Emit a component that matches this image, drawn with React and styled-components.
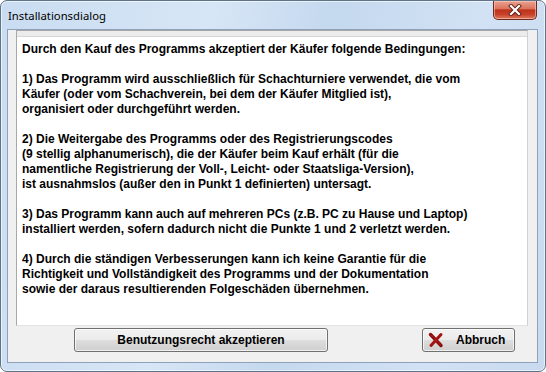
import React from 'react'
import styled, { createGlobalStyle } from 'styled-components'

const GlobalStyle = createGlobalStyle`
    html, body {
        margin: 0;
        padding: 0;
        background: #ffffff;
    }
`

const Window = styled.div`
    box-sizing: border-box;
    width: 546px;
    height: 372px;
    display: flex;
    flex-direction: column;
    padding: 0 7px 8px 6px;
    border: 1px solid #5f7389;
    border-radius: 7px;
    background: linear-gradient(100deg, #c9dcf1 0%, #d7e6f6 35%, #c4d8ee 55%, #d2e2f4 80%, #c8daef 100%);
    box-shadow: inset 0 0 0 1px rgba(255, 255, 255, 0.6);
`

const TitleBar = styled.div`
    height: 28px;
    display: flex;
    align-items: flex-start;
    justify-content: space-between;
`

const Title = styled.span`
    font-family: 'Noto Sans', 'Open Sans', sans-serif;
    font-size: 11.3px;
    color: #000;
    margin-top: 7px;
    margin-left: 1px;
    line-height: 16px;
`

const CloseButton = styled.div`
    box-sizing: border-box;
    width: 44px;
    height: 19px;
    margin-right: 1px;
    display: flex;
    align-items: center;
    justify-content: center;
    border: 1px solid #6e2a20;
    border-top: none;
    border-radius: 0 0 5px 5px;
    background: linear-gradient(to bottom, #eaa291 0%, #dc745d 42%, #bd3219 50%, #c8422a 75%, #de7c5e 100%);
    box-shadow: inset 0 0 0 1px rgba(255, 210, 200, 0.55);
`

const Client = styled.div`
    flex: 1;
    display: flex;
    flex-direction: column;
    padding: 0 9px 10px 8px;
    background: #f0f0f0;
    border: 1px solid #8da2ba;
`

const Panel = styled.div`
    box-sizing: border-box;
    height: 296px;
    display: flex;
    flex-direction: column;
    border: 1px solid #a8a8a8;
    border-right-color: #d0d0d0;
    border-bottom-color: #e2e2e2;
    background: #ffffff;
`

const PanelTop = styled.div`
    height: 5px;
    background: #ececec;
    border-bottom: 1px solid #d6d6d6;
`

const Terms = styled.div`
    padding: 5px 5px 0 5px;
    font-family: 'Liberation Sans', Arial, sans-serif;
    font-weight: bold;
    font-size: 12px;
    line-height: 15px;
    color: #000;
`

const Para = styled.p`
    margin: 0 0 15px 0;
`

const ButtonRow = styled.div`
    display: flex;
    gap: 94px;
    margin-top: 2px;
    padding-left: 58px;
`

const Button = styled.button`
    box-sizing: border-box;
    width: ${p => p.$width}px;
    height: 24px;
    display: flex;
    align-items: center;
    justify-content: ${p => (p.$icon ? 'flex-start' : 'center')};
    gap: 12px;
    padding: 0 0 0 ${p => (p.$icon ? 5 : 0)}px;
    border: 1px solid #707070;
    border-radius: 3px;
    background: linear-gradient(to bottom, #f2f2f2 0%, #ebebeb 48%, #dddddd 52%, #cfcfcf 100%);
    box-shadow: inset 0 0 0 1px rgba(255, 255, 255, 0.7);
    font-family: 'Liberation Sans', Arial, sans-serif;
    font-weight: bold;
    font-size: 12px;
    color: #000;
`

const CancelGlyph = () => (
  <svg width="16" height="16" viewBox="0 0 16 16">
    <path d="M2.5 2.5 L13 13.5" stroke="#8c0a0a" strokeWidth="3.4" strokeLinecap="round" />
    <path d="M13 2.5 L3 13.5" stroke="#a31212" strokeWidth="3" strokeLinecap="round" />
    <path d="M3 2.8 L12.5 13" stroke="#c23a3a" strokeWidth="0.8" strokeLinecap="round" opacity="0.6" />
  </svg>
)

const CloseGlyph = () => (
  <svg width="14" height="12" viewBox="0 0 14 12">
    <path d="M3 2 L11 10 M11 2 L3 10" stroke="#5a1f18" strokeWidth="4" strokeLinecap="square" />
    <path d="M3 2 L11 10 M11 2 L3 10" stroke="#ffffff" strokeWidth="2.2" strokeLinecap="square" />
  </svg>
)

const App = () => {
  return (
    <>
      <GlobalStyle />
      <Window>
        <TitleBar>
          <Title>Installationsdialog</Title>
          <CloseButton>
            <CloseGlyph />
          </CloseButton>
        </TitleBar>
        <Client>
          <Panel>
            <PanelTop />
            <Terms>
              <Para>Durch den Kauf des Programms akzeptiert der Käufer folgende Bedingungen:</Para>
              <Para>
                1) Das Programm wird ausschließlich für Schachturniere verwendet, die vom<br />
                Käufer (oder vom Schachverein, bei dem der Käufer Mitglied ist),<br />
                organisiert oder durchgeführt werden.
              </Para>
              <Para>
                2) Die Weitergabe des Programms oder des Registrierungscodes<br />
                (9 stellig alphanumerisch), die der Käufer beim Kauf erhält (für die<br />
                namentliche Registrierung der Voll-, Leicht- oder Staatsliga-Version),<br />
                ist ausnahmslos (außer den in Punkt 1 definierten) untersagt.
              </Para>
              <Para>
                3) Das Programm kann auch auf mehreren PCs (z.B. PC zu Hause und Laptop)<br />
                installiert werden, sofern dadurch nicht die Punkte 1 und 2 verletzt werden.
              </Para>
              <Para>
                4) Durch die ständigen Verbesserungen kann ich keine Garantie für die<br />
                Richtigkeit und Vollständigkeit des Programms und der Dokumentation<br />
                sowie der daraus resultierenden Folgeschäden übernehmen.
              </Para>
            </Terms>
          </Panel>
          <ButtonRow>
            <Button $width={254}>Benutzungsrecht akzeptieren</Button>
            <Button $width={93} $icon>
              <CancelGlyph />
              Abbruch
            </Button>
          </ButtonRow>
        </Client>
      </Window>
    </>
  )
}

export default App
